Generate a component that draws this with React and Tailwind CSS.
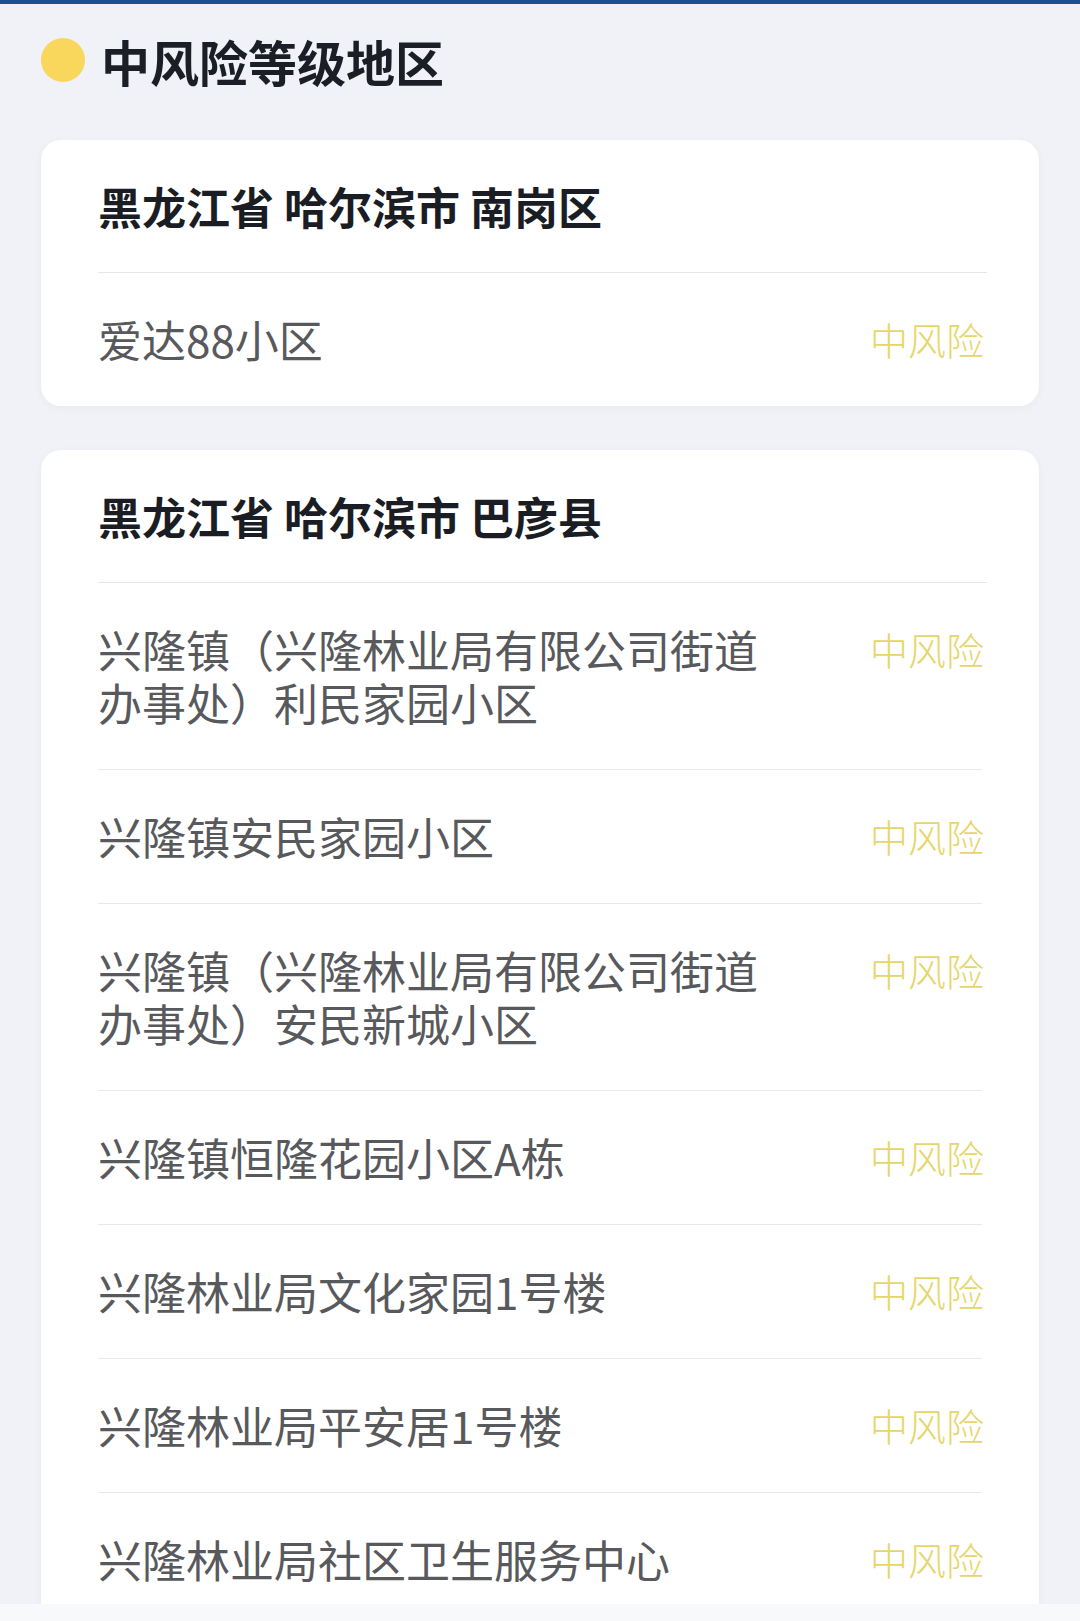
import React from "react";

const FONT = { fontFamily: '"Noto Sans CJK SC", "Noto Sans", sans-serif' };

function Row({ name, last }) {
  return (
    <>
      <div className="flex items-start justify-between py-[40px]">
        <div className="w-[680px] text-[44px] leading-[53px] text-[#58595c]">{name}</div>
        <div className="mr-[-2px] text-[38px] leading-[51px] font-light text-[#e6d66a] whitespace-nowrap">中风险</div>
      </div>
      {!last && <div className="h-px bg-[#e9e9ec]" />}
    </>
  );
}

function Card({ title, items, className = "" }) {
  return (
    <div className={"rounded-[20px] bg-white px-[57px] shadow-[0_2px_10px_rgba(30,40,80,0.04)] " + className}>
      <div className="pt-[40px] pb-[39px] text-[44px] leading-[53px] font-bold text-[#1b1d24] whitespace-pre">{title}</div>
      <div className="h-px bg-[#e6e6ea] mr-[-5px]" />
      {items.map((it, i) => (
        <Row key={i} name={it} last={i === items.length - 1} />
      ))}
    </div>
  );
}

export default function App() {
  return (
    <div style={FONT} className="w-[1080px] h-[1621px] overflow-hidden bg-[#f0f2f7] flex flex-col">
      <div className="h-[4px] bg-[#1e4f8e] shrink-0" />
      <div className="h-[1600px] overflow-hidden shrink-0 px-[41px]">
        <div className="h-[112px] flex items-center mb-[24px]">
          <div className="w-[44px] h-[44px] rounded-full bg-[#f9d65c]" />
          <div className="ml-[16px] text-[49px] leading-none font-bold text-[#1b1e27]">中风险等级地区</div>
        </div>
        <Card title="黑龙江省 哈尔滨市 南岗区" items={["爱达88小区"]} />
        <Card
          className="mt-[44px]"
          title="黑龙江省 哈尔滨市 巴彦县"
          items={[
            "兴隆镇（兴隆林业局有限公司街道办事处）利民家园小区",
            "兴隆镇安民家园小区",
            "兴隆镇（兴隆林业局有限公司街道办事处）安民新城小区",
            "兴隆镇恒隆花园小区A栋",
            "兴隆林业局文化家园1号楼",
            "兴隆林业局平安居1号楼",
            "兴隆林业局社区卫生服务中心",
          ]}
        />
      </div>
      <div className="flex-1 bg-[#f8f9fb]" />
    </div>
  );
}
